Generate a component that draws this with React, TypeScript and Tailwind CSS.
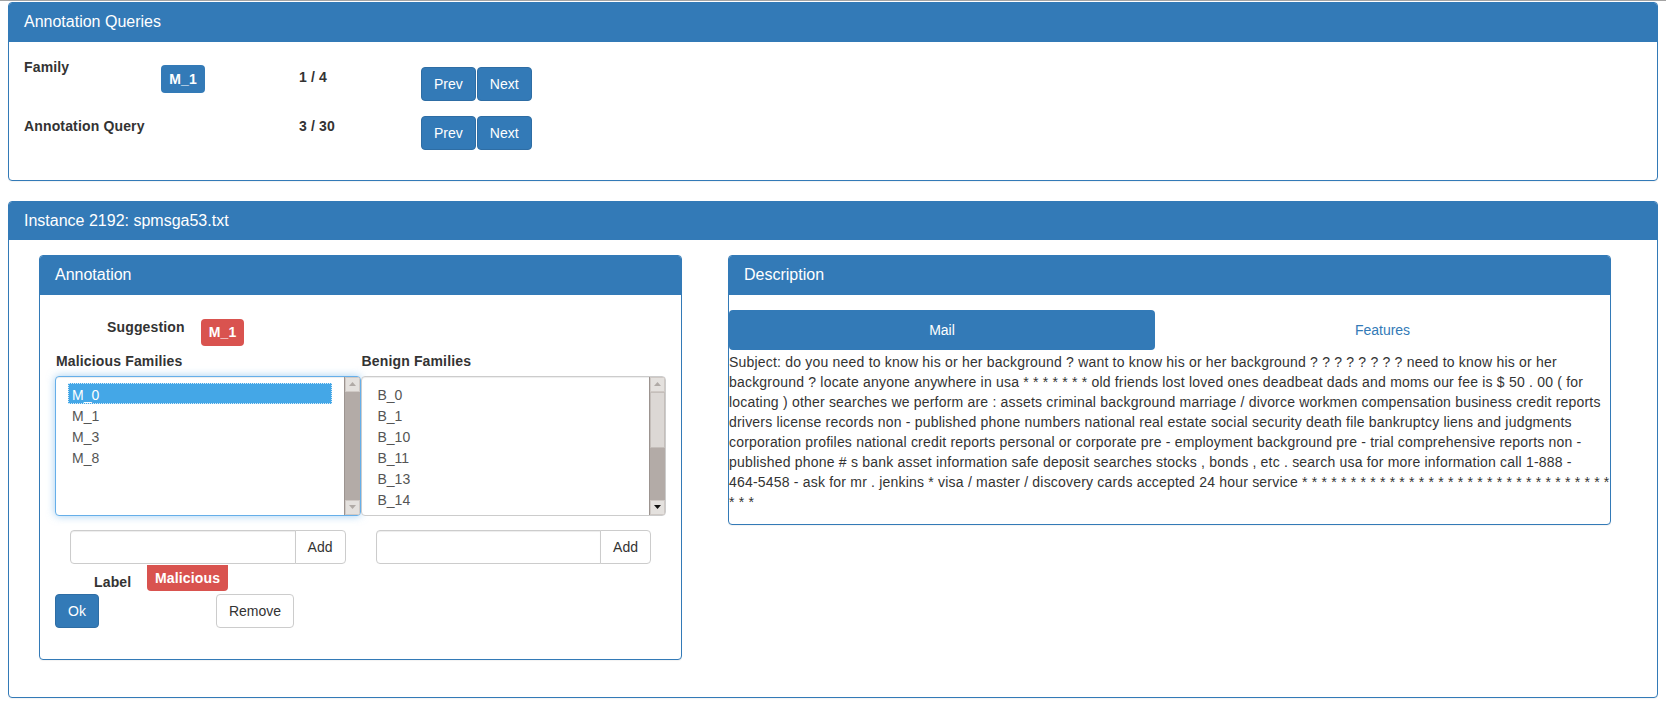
import React from "react";

function Panel({
  title,
  className,
  bodyClass,
  children,
}: {
  title: string;
  className?: string;
  bodyClass?: string;
  children: React.ReactNode;
}) {
  return (
    <div
      className={
        "rounded-[4px] border border-[#337ab7] bg-white shadow-[0_1px_1px_rgba(0,0,0,0.05)] " +
        (className ?? "")
      }
    >
      <div className="rounded-t-[3px] border-b border-[#337ab7] bg-[#337ab7] px-[15px] py-[10px] text-[16px] leading-[1.1] tracking-normal text-white">
        {title}
      </div>
      <div className={bodyClass}>{children}</div>
    </div>
  );
}

function BlueButton({ children, className }: { children: React.ReactNode; className?: string }) {
  return (
    <button
      className={
        "h-[34px] rounded-[4px] border border-[#2e6da4] bg-[#337ab7] px-[12px] text-[14px] tracking-normal text-white " +
        (className ?? "")
      }
    >
      {children}
    </button>
  );
}

function Arrow({ up, dark }: { up: boolean; dark: boolean }) {
  return (
    <svg width="7" height="4" viewBox="0 0 7 4">
      <path d={up ? "M3.5 0L7 4H0z" : "M0 0H7L3.5 4z"} fill={dark ? "#111" : "#b0aaa6"} />
    </svg>
  );
}

function ScrollBar({ thumb }: { thumb: boolean }) {
  return (
    <div className="flex w-[16px] flex-col border-l border-[#9c9490] bg-[#b3aba7]">
      <div className="flex h-[15px] items-center justify-center border border-[#cfc9c5] bg-[#e4e1de]">
        <Arrow up dark={false} />
      </div>
      <div className="flex-1">
        {thumb && <div className="h-[56px] border border-[#c4beba] bg-[#dcd8d5]" />}
      </div>
      <div className="flex h-[15px] items-center justify-center border border-[#cfc9c5] bg-[#e4e1de]">
        <Arrow up={false} dark={thumb} />
      </div>
    </div>
  );
}

function ListBox({ items, selected, focused }: { items: string[]; selected?: string; focused?: boolean }) {
  return (
    <div
      className={
        focused
          ? "flex h-[140px] overflow-hidden rounded-[4px] border border-[#66afe9] bg-white shadow-[inset_0_1px_1px_rgba(0,0,0,0.075),0_0_8px_rgba(102,175,233,0.6)]"
          : "flex h-[140px] overflow-hidden rounded-[4px] border border-[#ccc] bg-white shadow-[inset_0_1px_1px_rgba(0,0,0,0.075)]"
      }
    >
      <div className="flex-1 px-[12px] py-[6px] tracking-normal text-[#555]">
        {items.map((it) =>
          it === selected ? (
            <div
              key={it}
              className="h-[21px] border border-dotted border-[#d5ecfb] bg-[#44a7e7] pl-[3px] pt-px leading-[20px] text-white"
            >
              {it}
            </div>
          ) : (
            <div key={it} className="h-[21px] pl-[4px] pt-[2px] leading-[20px]">
              {it}
            </div>
          )
        )}
      </div>
      <ScrollBar thumb={!focused} />
    </div>
  );
}

function AddGroup() {
  return (
    <div className="mx-[15px] mt-[14px] flex h-[34px]">
      <div className="flex-1 rounded-l-[4px] border border-[#ccc] shadow-[inset_0_1px_1px_rgba(0,0,0,0.075)]" />
      <button className="-ml-px h-[34px] rounded-r-[4px] border border-[#ccc] bg-white px-[12px] text-[14px] tracking-normal text-[#333]">
        Add
      </button>
    </div>
  );
}

const MAIL_A =
  "Subject: do you need to know his or her background ? want to know his or her background ? ? ? ? ? ? ? ? need to know his or her background ? locate anyone anywhere in usa * * * * * * * old friends lost loved ones deadbeat dads and moms our fee is $ 50 . 00 ( for locating ) other searches we perform are : assets criminal background marriage / divorce workmen compensation business credit reports drivers license records non - published phone numbers national real estate social security death file bankruptcy liens and judgments corporation profiles national credit reports personal or corporate pre - employment background pre - trial comprehensive reports non - published phone # s bank asset information safe deposit searches stocks , bonds , etc . search usa for more information call ";
const MAIL_B =
  " - ask for mr . jenkins * visa / master / discovery cards accepted 24 hour service * * * * * * * * * * * * * * * * * * * * * * * * * * * * * * * * * * *";

export default function App() {
  return (
    <div className="min-h-screen bg-white font-['Liberation_Sans',Arial,sans-serif] text-[14px] leading-[20px] tracking-[0.15px] text-[#333]">
      <div className="h-px bg-[#a3a3a3]" />
      <div className="px-2 pt-px">
        {/* Annotation queries */}
        <Panel title="Annotation Queries" bodyClass="px-[15px] pt-[15px] pb-[30px]">
          <div className="flex h-[44px] items-start">
            <div className="w-[137px] font-bold">Family</div>
            <div className="w-[138px]">
              <span className="mt-[8px] flex h-[28px] w-[44px] items-center justify-center rounded-[4px] bg-[#337ab7] font-bold text-white">
                M_1
              </span>
            </div>
            <div className="mt-[10px] w-[122px] font-bold">1 / 4</div>
            <div className="mt-[10px] flex gap-px">
              <BlueButton>Prev</BlueButton>
              <BlueButton>Next</BlueButton>
            </div>
          </div>
          <div className="mt-[15px] flex h-[34px] items-start">
            <div className="w-[275px] font-bold">Annotation Query</div>
            <div className="w-[122px] font-bold">3 / 30</div>
            <div className="flex gap-px">
              <BlueButton>Prev</BlueButton>
              <BlueButton>Next</BlueButton>
            </div>
          </div>
        </Panel>

        {/* Instance */}
        <Panel
          title="Instance 2192: spmsga53.txt"
          className="mt-[20px]"
          bodyClass="flex items-start pl-[30px] pt-[15px] pb-[17px]"
        >
          <Panel title="Annotation" className="mb-[20px] w-[643px]" bodyClass="px-[15px] pt-[22px] pb-[31px]">
            <div className="flex h-[29px] items-start">
              <div className="ml-[52px] w-[94px] font-bold">Suggestion</div>
              <span className="mt-[2px] flex h-[27px] w-[43px] items-center justify-center rounded-[4px] bg-[#d9534f] font-bold text-white">
                M_1
              </span>
            </div>
            <div className="mt-[5px] grid grid-cols-2">
              <div>
                <div className="mb-[5px] pl-px font-bold">Malicious Families</div>
                <ListBox items={["M_0", "M_1", "M_3", "M_8"]} selected="M_0" focused />
                <AddGroup />
              </div>
              <div>
                <div className="mb-[5px] pl-px font-bold">Benign Families</div>
                <ListBox items={["B_0", "B_1", "B_10", "B_11", "B_13", "B_14"]} />
                <AddGroup />
              </div>
            </div>
            <div className="flex h-[28px] items-start">
              <div className="ml-[39px] mt-[8px] w-[53px] font-bold">Label</div>
              <span className="mt-[1px] flex h-[26px] items-center rounded-b-[4px] bg-[#d9534f] px-[8px] font-bold text-white">
                Malicious
              </span>
            </div>
            <div className="mt-[2px] flex">
              <BlueButton>Ok</BlueButton>
              <button className="ml-[117px] h-[34px] rounded-[4px] border border-[#ccc] bg-white px-[12px] text-[14px] tracking-normal text-[#333]">
                Remove
              </button>
            </div>
          </Panel>

          <Panel title="Description" className="ml-[46px] w-[883px]" bodyClass="pt-[15px] pb-[12px]">
            <div className="flex h-[40px] tracking-normal">
              <div className="flex w-[426px] items-center justify-center rounded-[4px] bg-[#337ab7] text-white">
                Mail
              </div>
              <div className="flex flex-1 items-center justify-center text-[#337ab7]">Features</div>
            </div>
            <p className="mt-[2px] tracking-[0.2px]">
              {MAIL_A}
              <span className="whitespace-nowrap">1-888</span> - <span className="whitespace-nowrap">464-5458</span>
              {MAIL_B}
            </p>
          </Panel>
        </Panel>
      </div>
    </div>
  );
}
